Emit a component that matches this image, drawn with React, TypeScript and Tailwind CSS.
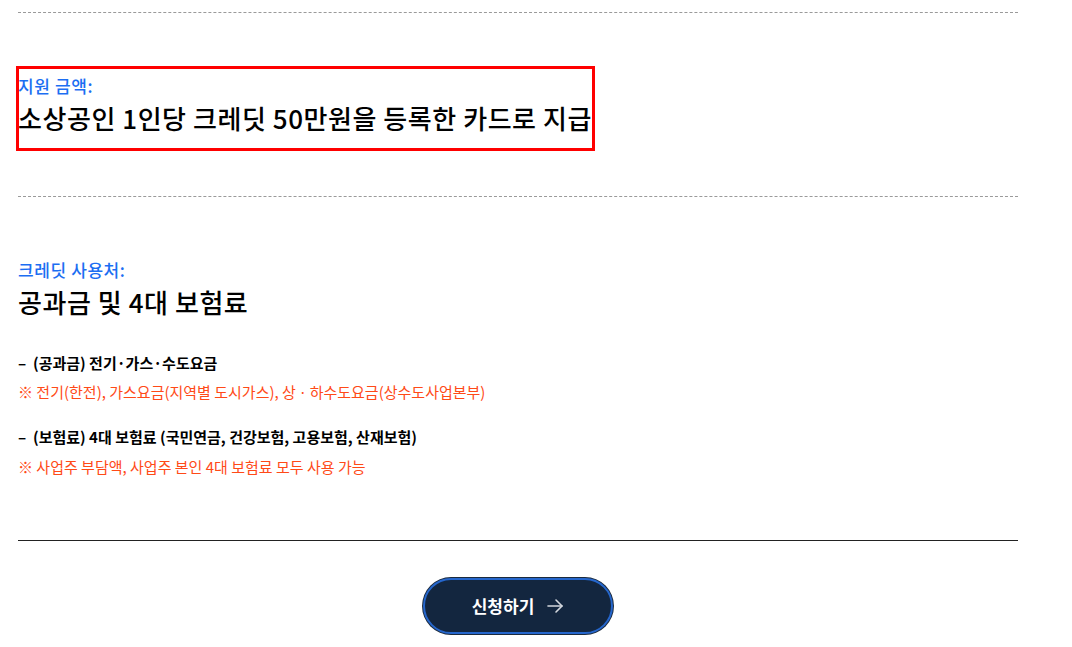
import React from "react";

const font = { fontFamily: '"Noto Sans CJK KR", "Noto Sans", sans-serif' };

export default function App() {
  return (
    <div className="bg-white min-h-[647px] w-[1072px] text-black" style={font}>
      <div className="w-[1000px] ml-[18px]">
        <div className="pt-[12px] border-b border-dashed border-[#9a9a9a]" />
        <div className="mt-[55px] h-[81px] outline-[3px] outline-solid outline-[#ff0000] -outline-offset-1 w-[575px] pt-[7px]">
          <div className="text-[17px] leading-[22px] font-medium tracking-[0.6px] text-[#1c6ef2]">지원 금액:</div>
          <div className="text-[26px] leading-[34px] font-medium tracking-[0.55px] mt-[4px]">
            소상공인 1인당 크레딧 50만원을 등록한 카드로 지급
          </div>
        </div>
        <div className="mt-[47px] border-b border-dashed border-[#9a9a9a]" />
        <div className="mt-[62px]">
          <div className="text-[17px] leading-[22px] font-medium tracking-[0.6px] text-[#1c6ef2]">크레딧 사용처:</div>
          <div className="text-[26px] leading-[34px] font-medium tracking-[0.55px] mt-[4px]">공과금 및 4대 보험료</div>
        </div>
        <div className="mt-[33px] flex flex-col">
          <div className="text-[15px] leading-[22px] font-bold">–&nbsp; (공과금) 전기·가스·수도요금</div>
          <div className="text-[15px] leading-[20px] text-[#ff4a17] mt-[8px]">
            ※ 전기(한전), 가스요금(지역별 도시가스), 상ㆍ하수도요금(상수도사업본부)
          </div>
          <div className="text-[15px] leading-[22px] font-bold mt-[24px]">–&nbsp; (보험료) 4대 보험료 (국민연금, 건강보험, 고용보험, 산재보험)</div>
          <div className="text-[15px] leading-[20px] text-[#ff4a17] mt-[9px]">
            ※ 사업주 부담액, 사업주 본인 4대 보험료 모두 사용 가능
          </div>
        </div>
        <div className="mt-[63px] border-b border-[#222]" />
        <div className="flex justify-center mt-[37px]">
          <button className="w-[190px] h-[56px] rounded-full bg-[#13263f] border-2 border-[#2566cc] ring-1 ring-[#1b2a3d] flex items-center justify-center gap-[12px] text-white text-[17px] font-bold">
            <span>신청하기</span>
            <svg width="18" height="18" viewBox="0 0 18 18" fill="none" stroke="#d4d8de" strokeWidth="1.6" strokeLinecap="round" strokeLinejoin="round">
              <path d="M2 9h14" />
              <path d="M10 3l6 6-6 6" />
            </svg>
          </button>
        </div>
      </div>
    </div>
  );
}
